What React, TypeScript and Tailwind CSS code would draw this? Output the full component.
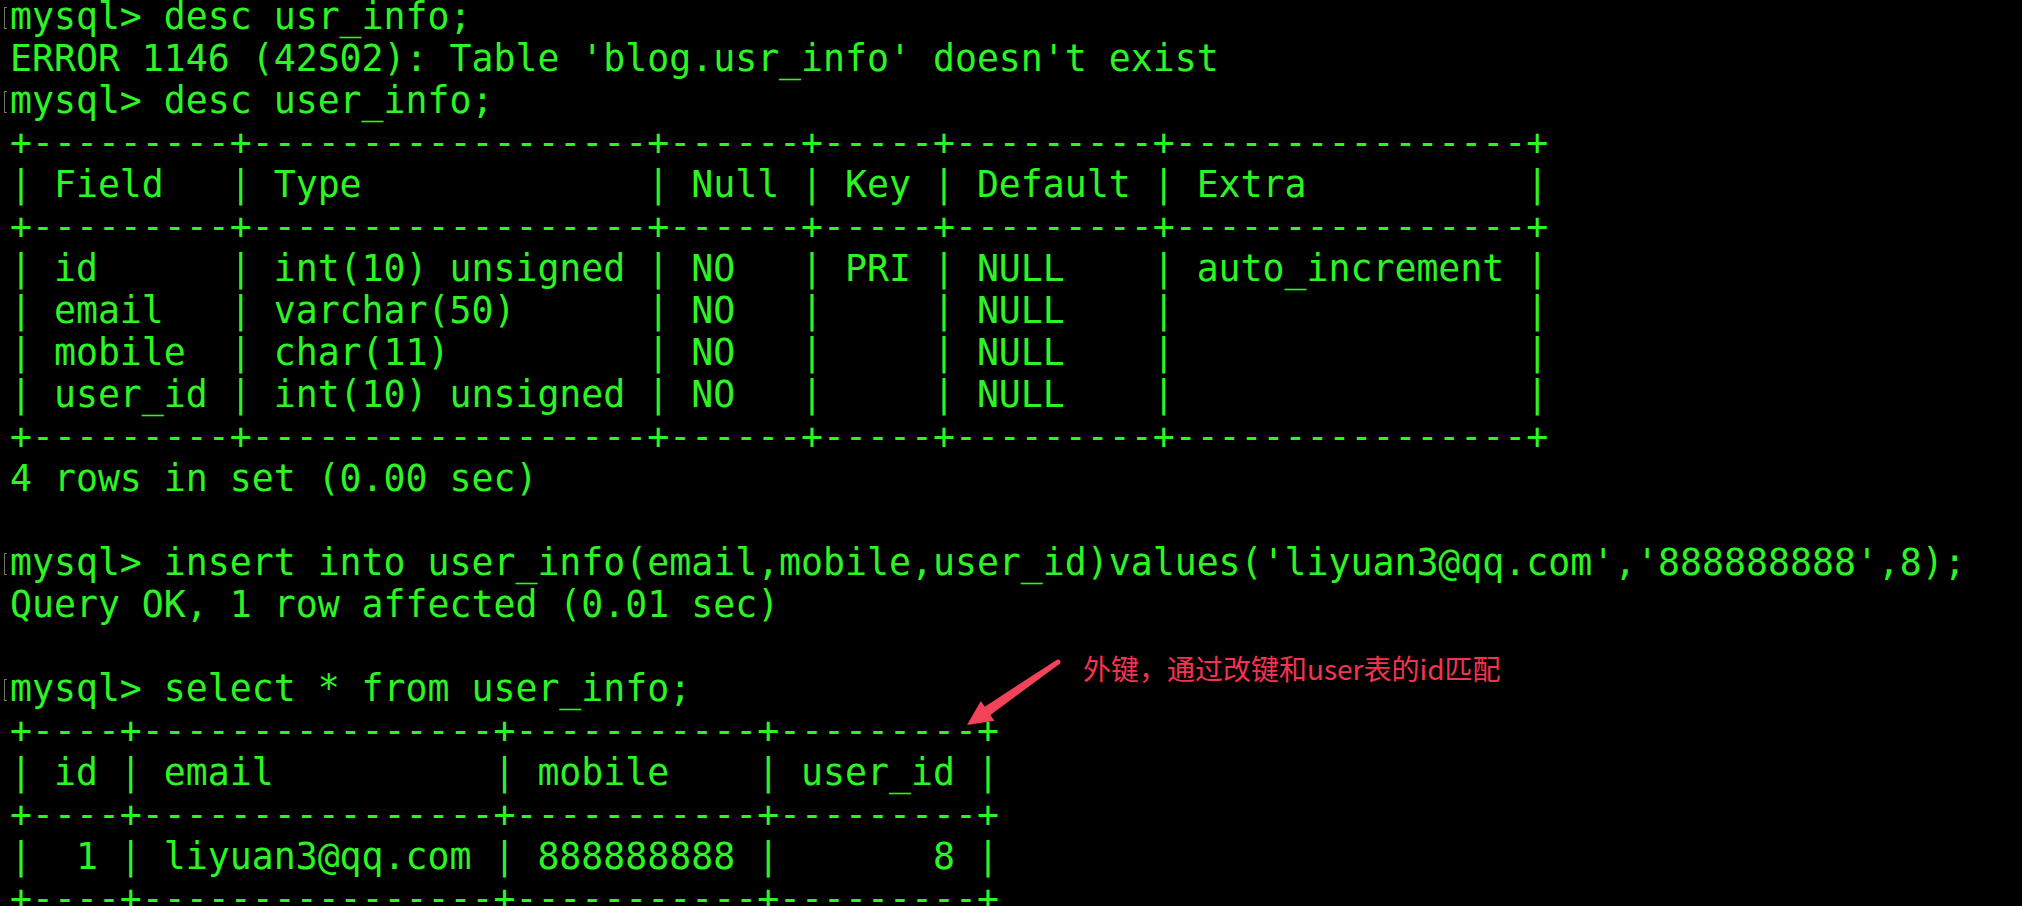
import React from "react";

type Line = { text: string; prompt?: boolean };

const lines: Line[] = [
  { text: "mysql> desc usr_info;", prompt: true },
  { text: "ERROR 1146 (42S02): Table 'blog.usr_info' doesn't exist" },
  { text: "mysql> desc user_info;", prompt: true },
  { text: "+---------+------------------+------+-----+---------+----------------+" },
  { text: "| Field   | Type             | Null | Key | Default | Extra          |" },
  { text: "+---------+------------------+------+-----+---------+----------------+" },
  { text: "| id      | int(10) unsigned | NO   | PRI | NULL    | auto_increment |" },
  { text: "| email   | varchar(50)      | NO   |     | NULL    |                |" },
  { text: "| mobile  | char(11)         | NO   |     | NULL    |                |" },
  { text: "| user_id | int(10) unsigned | NO   |     | NULL    |                |" },
  { text: "+---------+------------------+------+-----+---------+----------------+" },
  { text: "4 rows in set (0.00 sec)" },
  { text: "" },
  {
    text: "mysql> insert into user_info(email,mobile,user_id)values('liyuan3@qq.com','888888888',8);",
    prompt: true,
  },
  { text: "Query OK, 1 row affected (0.01 sec)" },
  { text: "" },
  { text: "mysql> select * from user_info;", prompt: true },
  { text: "+----+----------------+-----------+---------+" },
  { text: "| id | email          | mobile    | user_id |" },
  { text: "+----+----------------+-----------+---------+" },
  { text: "|  1 | liyuan3@qq.com | 888888888 |       8 |" },
  { text: "+----+----------------+-----------+---------+" },
];

function TermLine({ line }: { line: Line }) {
  if (line.prompt) {
    return (
      <div className="flex h-[42px] items-center pl-[4px]">
        <span className="mr-[3px] mt-[11px] h-[22px] w-[3px] shrink-0 self-start border-y border-l border-[#6f7466]" />
        <span className="whitespace-pre">{line.text}</span>
      </div>
    );
  }
  return (
    <div className="flex h-[42px] items-center pl-[10px]">
      <span className="whitespace-pre">{line.text}</span>
    </div>
  );
}

export default function App() {
  return (
    <div className="relative h-[906px] w-[2022px] overflow-hidden bg-black">
      <div
        className="-mt-[4px] flex flex-col text-[36.5px] leading-[42px] text-[#2cf524]"
        style={{ fontFamily: '"DejaVu Sans Mono", "Liberation Mono", monospace' }}
      >
        {lines.map((l, i) => (
          <TermLine key={i} line={l} />
        ))}
      </div>

      <svg className="absolute left-0 top-0" width={2022} height={906} viewBox="0 0 2022 906">
        <polygon
          points="1059.4,664.1 990.4,714.9 994.4,720.7 967,725 980.8,700.9 984.8,706.7 1056.6,659.9"
          fill="#f2435a"
        />
        <circle cx="1058" cy="662" r="2.5" fill="#f2435a" />
      </svg>

      <div
        className="absolute left-[1083px] top-[654px] whitespace-nowrap text-[28px] leading-none text-[#f5334f]"
        style={{ fontFamily: '"Noto Sans CJK SC", "Noto Sans", sans-serif' }}
      >
        外键，通过改键和user表的id匹配
      </div>
    </div>
  );
}
